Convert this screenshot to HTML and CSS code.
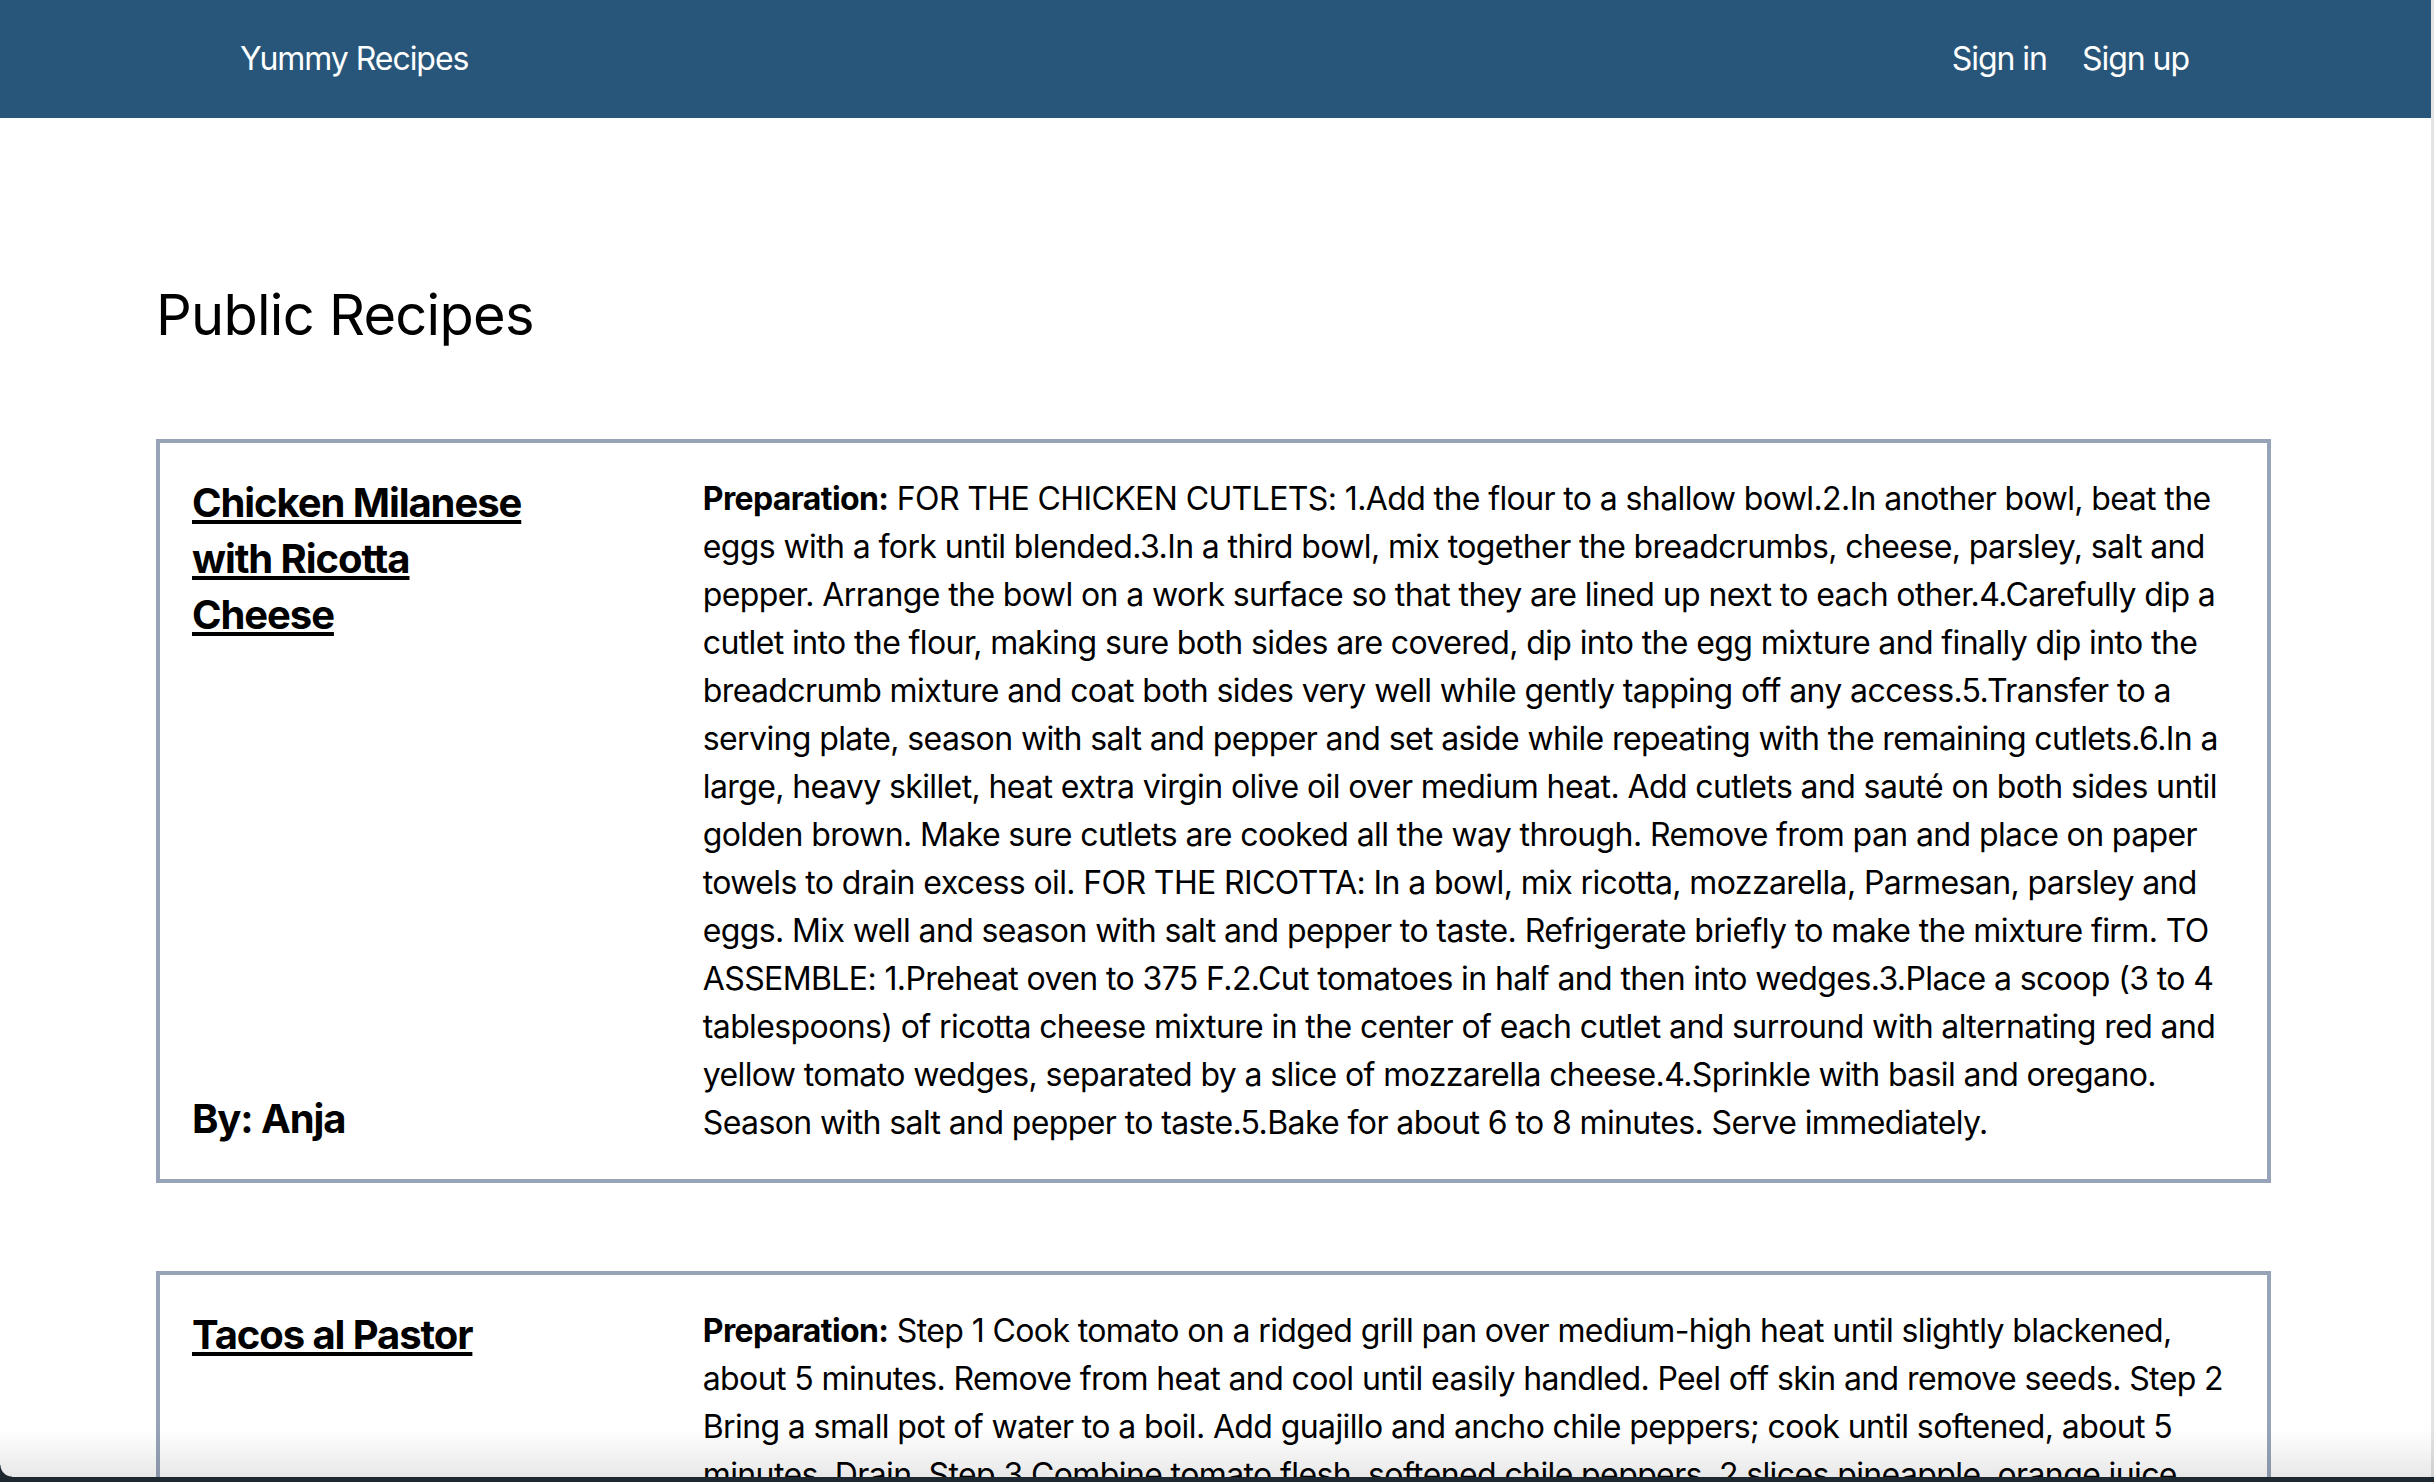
FILE: index.html
```html
<!DOCTYPE html>
<html lang="en">
<head>
<meta charset="utf-8">
<title>Yummy Recipes</title>
<link rel="stylesheet" href="styles.css">
</head>
<body>
<header class="topbar">
  <a class="brand" href="#">Yummy Recipes</a>
  <nav class="auth">
    <a href="#">Sign in</a>
    <a href="#">Sign up</a>
  </nav>
</header>
<main class="page">
  <h1 class="page-title">Public Recipes</h1>
  <article class="recipe">
    <div class="recipe-meta">
      <h2 class="recipe-title"><a href="#">Chicken Milanese with Ricotta Cheese</a></h2>
      <p class="recipe-author">By: Anja</p>
    </div>
    <p class="recipe-prep"><strong>Preparation:</strong> FOR THE CHICKEN CUTLETS: 1.Add the flour to a shallow bowl.2.In another bowl, beat the eggs with a fork until blended.3.In a third bowl, mix together the breadcrumbs, cheese, parsley, salt and pepper. Arrange the bowl on a work surface so that they are lined up next to each other.4.Carefully dip a cutlet into the flour, making sure both sides are covered, dip into the egg mixture and finally dip into the breadcrumb mixture and coat both sides very well while gently tapping off any access.5.Transfer to a serving plate, season with salt and pepper and set aside while repeating with the remaining cutlets.6.In a large, heavy skillet, heat extra virgin olive oil over medium heat. Add cutlets and sauté on both sides until golden brown. Make sure cutlets are cooked all the way through. Remove from pan and place on paper towels to drain excess oil. FOR THE RICOTTA: In a bowl, mix ricotta, mozzarella, Parmesan, parsley and eggs. Mix well and season with salt and pepper to taste. Refrigerate briefly to make the mixture firm. TO ASSEMBLE: 1.Preheat oven to 375 F.2.Cut tomatoes in half and then into wedges.3.Place a scoop (3 to 4 tablespoons) of ricotta cheese mixture in the center of each cutlet and surround with alternating red and yellow tomato wedges, separated by a slice of mozzarella cheese.4.Sprinkle with basil and oregano. Season with salt and pepper to taste.5.Bake for about 6 to 8 minutes. Serve immediately.</p>
  </article>
  <article class="recipe">
    <div class="recipe-meta">
      <h2 class="recipe-title"><a href="#">Tacos al Pastor</a></h2>
      <p class="recipe-author">By: Anja</p>
    </div>
    <p class="recipe-prep"><strong>Preparation:</strong> Step 1 Cook tomato on a ridged grill pan over medium-high heat until slightly blackened, about 5 minutes. Remove from heat and cool until easily handled. Peel off skin and remove seeds. Step 2 Bring a small pot of water to a boil. Add guajillo and ancho chile peppers; cook until softened, about 5 minutes. Drain. Step 3 Combine tomato flesh, softened chile peppers, 2 slices pineapple, orange juice, onion, vinegar, garlic, chipotle pepper in adobo sauce, achiote powder, salt, cumin, and oregano in a blender; blend until smooth. Step 4 Place pork slices in a large resealable plastic bag and pour in the marinade. Seal bag and refrigerate for at least 2 hours or overnight.</p>
  </article>
</main>
<div class="window-fade"></div>
<div class="window-edge"></div>
<div class="window-corner"></div>
</body>
</html>
```
FILE: styles.css
```css
* {
  box-sizing: border-box;
}

html {
  background: #e4e4e4;
}

body {
  margin: 0 3px 0 0;
  background: #ffffff;
  color: #000000;
  font-family: Inter, "Noto Sans", sans-serif;
  min-height: 1482px;
}

a {
  color: inherit;
}

.topbar {
  height: 118px;
  background: #28567a;
  display: flex;
  align-items: center;
  justify-content: space-between;
  padding: 0 242px 0 240px;
  font-size: 32px;
  line-height: 48px;
  letter-spacing: -0.0325em;
  color: #ffffff;
}

.brand {
  text-decoration: none;
}

.auth {
  display: flex;
  gap: 35px;
}

.auth a {
  text-decoration: none;
}

.page {
  padding: 161px 160px 0 156px;
}

.page-title {
  margin: 0 0 88px;
  font-size: 56px;
  line-height: 72px;
  font-weight: 400;
  letter-spacing: -0.013em;
}

.recipe {
  border: 4px solid #97a4b8;
  padding: 32px;
  display: flex;
  justify-content: space-between;
  margin-bottom: 88px;
}

.recipe-meta {
  width: 16.6667%;
  display: flex;
  flex-direction: column;
  justify-content: space-between;
}

.recipe-title {
  margin: 0;
  font-size: 40px;
  line-height: 56px;
  font-weight: 700;
  letter-spacing: -0.027em;
}

.recipe-title a {
  text-decoration: underline;
  text-decoration-thickness: 4px;
  text-underline-offset: 3px;
}

.recipe-author {
  margin: 0;
  font-size: 40px;
  line-height: 56px;
  font-weight: 700;
  letter-spacing: -0.028em;
}

.recipe-prep {
  width: 75%;
  margin: 0;
  font-size: 32px;
  line-height: 48px;
  letter-spacing: -0.019em;
}

.recipe-prep strong {
  font-weight: 700;
}

.window-fade {
  position: fixed;
  left: 0;
  right: 0;
  bottom: 5px;
  height: 48px;
  background: linear-gradient(to bottom, rgba(0, 0, 0, 0), rgba(0, 0, 0, 0.09));
  pointer-events: none;
}

.window-edge {
  position: fixed;
  left: 0;
  right: 0;
  bottom: 0;
  height: 5px;
  background: #1d2831;
}

.window-corner {
  position: fixed;
  left: 0;
  bottom: 5px;
  width: 12px;
  height: 12px;
  background: radial-gradient(circle at 100% 0, rgba(0, 0, 0, 0) 11px, #1d2831 12px);
}
```
